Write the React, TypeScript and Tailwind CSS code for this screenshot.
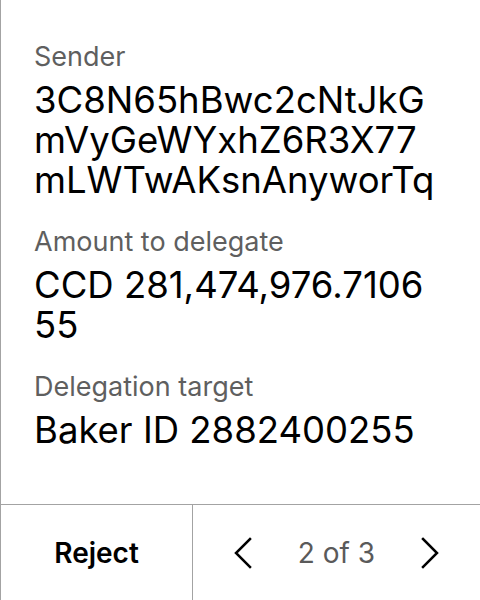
export default function App() {
  const fields = [
    { label: "Sender", lines: ["3C8N65hBwc2cNtJkG", "mVyGeWYxhZ6R3X77", "mLWTwAKsnAnyworTq"] },
    { label: "Amount to delegate", lines: ["CCD 281,474,976.7106", "55"] },
    { label: "Delegation target", lines: ["Baker ID 2882400255"] },
  ];

  return (
    <div
      className="flex h-[600px] w-[480px] flex-col border-l border-[#a3a3a3] bg-white"
      style={{ fontFamily: "Inter, 'Noto Sans', sans-serif" }}
    >
      {/* Transaction details */}
      <div className="flex flex-1 flex-col gap-[25px] pl-[33px] pt-[40px]">
        {fields.map((f) => (
          <div key={f.label} className="flex flex-col">
            <div className="text-[27px] leading-[34px] text-[#5f5f5f]">{f.label}</div>
            <div className="mt-[6px] text-[36.5px] leading-[40px] text-black">
              {f.lines.map((l) => (
                <div key={l}>{l}</div>
              ))}
            </div>
          </div>
        ))}
      </div>

      {/* Footer actions */}
      <div className="flex h-[96px] border-t border-[#a3a3a3]">
        <button className="flex w-[192px] items-center justify-center border-r border-[#a3a3a3] text-[28px] font-semibold text-black">
          Reject
        </button>
        <div className="flex flex-1 items-center justify-between px-[36px]">
          <svg width="28" height="34" viewBox="0 0 28 34" fill="none" stroke="black" strokeWidth="2.5" strokeLinecap="square">
            <path d="M21 3 L7 17 L21 31" />
          </svg>
          <span className="text-[28px] text-[#5a5a5a]">2 of 3</span>
          <svg width="28" height="34" viewBox="0 0 28 34" fill="none" stroke="black" strokeWidth="2.5" strokeLinecap="square">
            <path d="M7 3 L21 17 L7 31" />
          </svg>
        </div>
      </div>
    </div>
  );
}
